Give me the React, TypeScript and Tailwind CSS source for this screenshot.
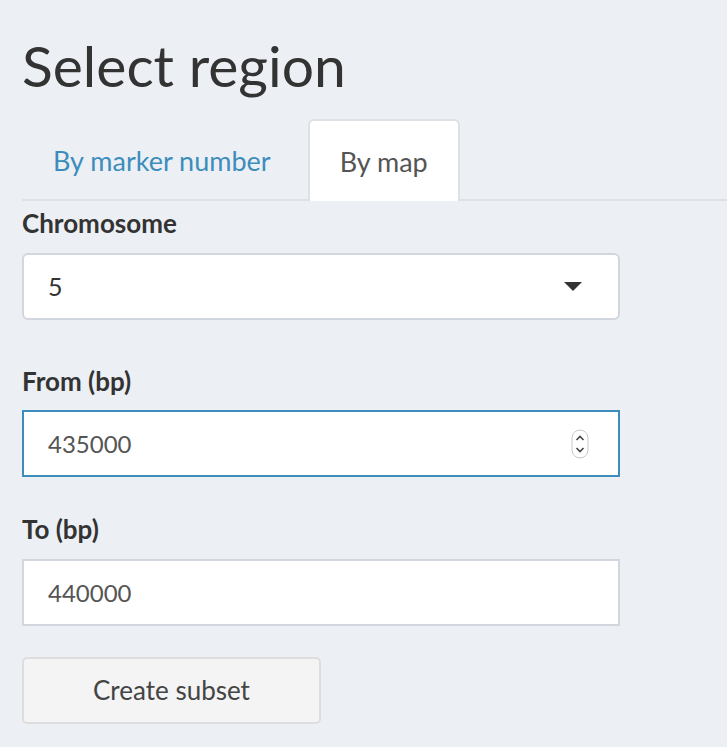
import React from "react";

const Spinner = () => (
  <svg width="18" height="30" viewBox="0 0 18 30" className="shrink-0">
    <rect x="1" y="1" width="16" height="28" rx="8" fill="#fff" stroke="#c8c8c8" />
    <path d="M5.5 11 L9 7.5 L12.5 11" fill="none" stroke="#444" strokeWidth="1.6" />
    <path d="M5.5 19 L9 22.5 L12.5 19" fill="none" stroke="#444" strokeWidth="1.6" />
  </svg>
);

const App = () => {
  return (
    <div className="min-h-screen bg-[#ecf0f5] pl-[22px] font-['Lato',sans-serif] text-[#333]">
      <h1 className="pt-[31px] text-[57px] leading-[1.2] font-normal">Select region</h1>

      <div className="mt-[20px] flex h-[82px] items-stretch border-b-2 border-[#dde1e6]">
        <div className="mr-[6px] flex items-center px-[31px] pt-[3px] text-[27px] text-[#3c8dbc]">
          By marker number
        </div>
        <div className="-mb-[2px] flex items-center rounded-t-[6px] border-2 border-b-0 border-[#dde1e6] bg-white px-[30px] pt-[1px] text-[27px] text-[#555]">
          By map
        </div>
      </div>

      <div className="w-[598px]">
        <label className="mt-[5px] block text-[26px] leading-[34px] font-bold">Chromosome</label>
        <div className="mt-[13px] flex h-[67px] items-center justify-between rounded-[6px] border-2 border-[#d2d6de] bg-white pr-[36px] pl-[24px] text-[25px] text-[#333]">
          <span>5</span>
          <span className="h-0 w-0 border-x-[9px] border-t-[9px] border-x-transparent border-t-[#333]" />
        </div>

        <label className="mt-[44px] block text-[26px] leading-[34px] font-bold">From (bp)</label>
        <div className="mt-[12px] flex h-[67px] items-center justify-between border-2 border-[#3c8dbc] bg-white pr-[29px] pl-[24px] text-[24px] text-[#555]">
          <span>435000</span>
          <Spinner />
        </div>

        <label className="mt-[35px] block text-[26px] leading-[34px] font-bold">To (bp)</label>
        <div className="mt-[13px] flex h-[67px] items-center border-2 border-[#d2d6de] bg-white pl-[24px] text-[24px] text-[#555]">
          <span>440000</span>
        </div>

        <button className="mt-[31px] flex h-[67px] w-[299px] items-center justify-center rounded-[5px] border-2 border-[#dddddd] bg-[#f4f4f4] text-[26px] text-[#444]">
          Create subset
        </button>
      </div>
    </div>
  );
};

export default App;
